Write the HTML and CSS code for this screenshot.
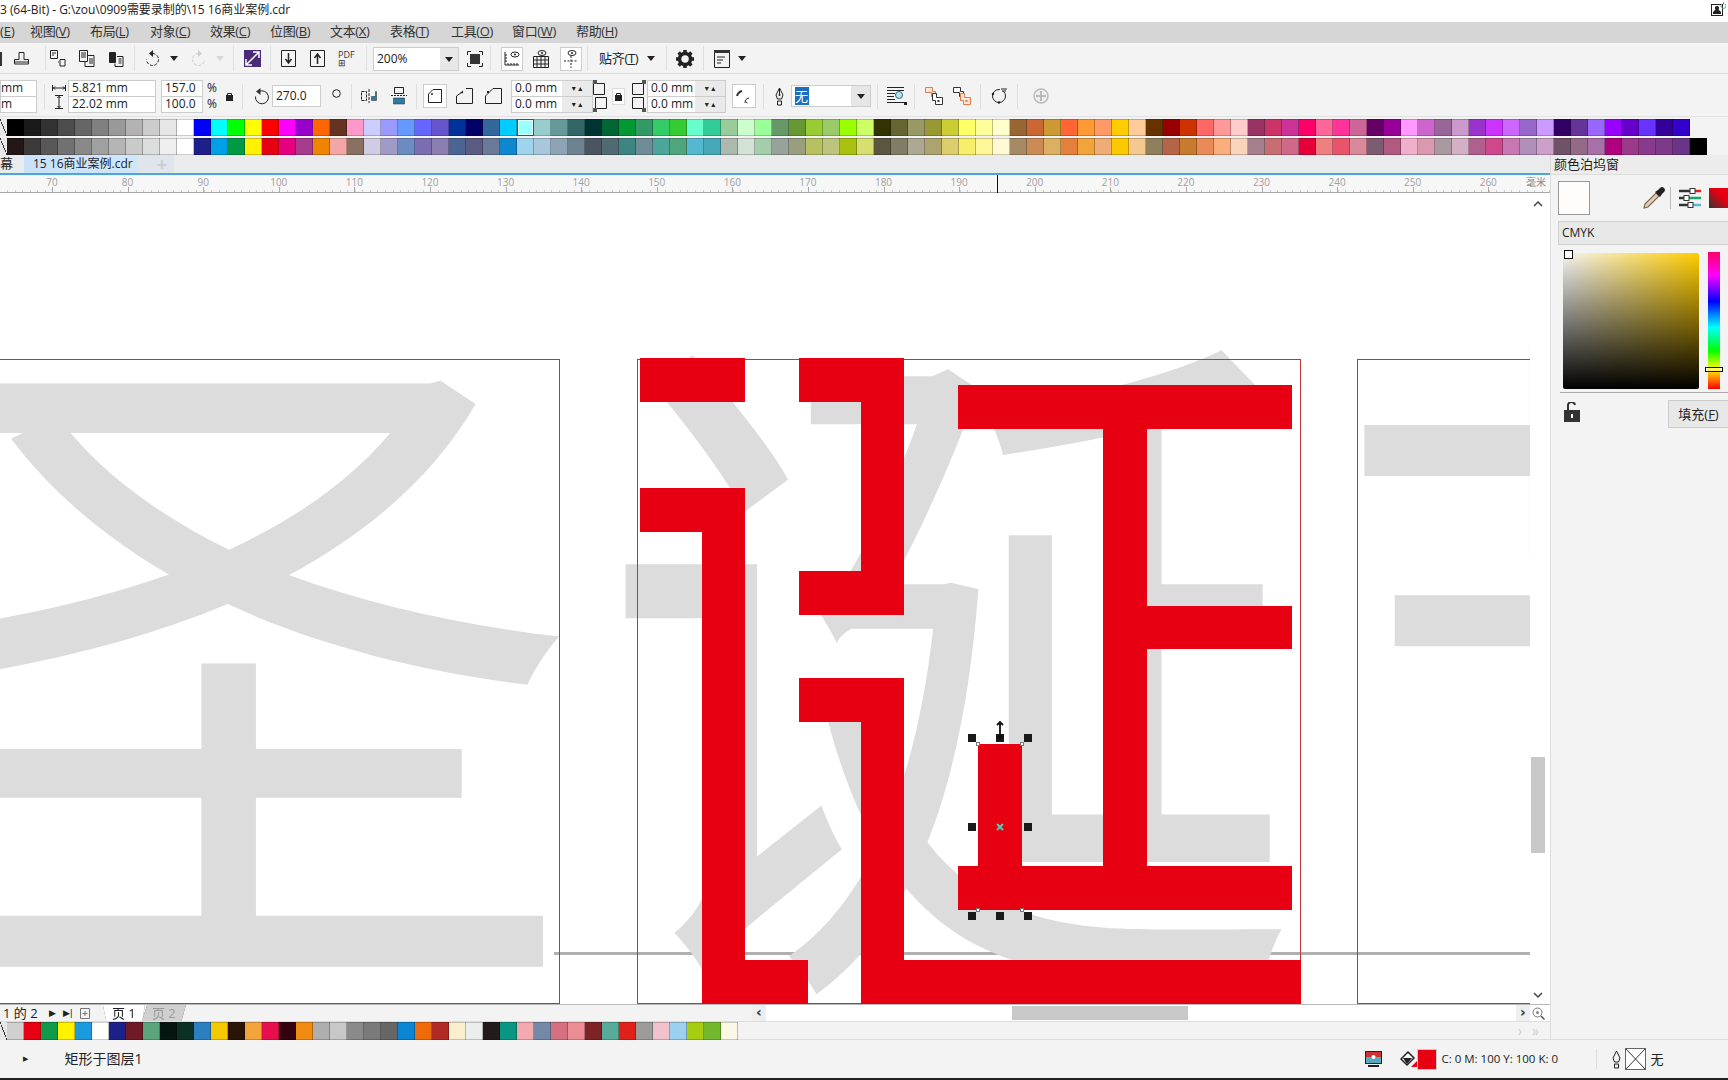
FILE: index.html
```html
<!DOCTYPE html>
<html lang="zh">
<head>
<meta charset="utf-8">
<title>CorelDRAW</title>
<link rel="stylesheet" href="styles.css">
</head>
<body>
<header class="title"><span>3 (64-Bit) - G:\zou\0909需要录制的\15 16商业案例.cdr</span>
<svg class="account" width="15" height="14" viewBox="0 0 15 14"><rect x=".5" y="2.5" width="11" height="11" fill="#fff" stroke="#222"/><path d="M6 4a2 2 0 0 1 1.5 3.4L10 10v2H2v-2l2.500-2.600A2 2 0 0 1 6 4z" fill="#222"/><path d="M11 2a2.500 2.500 0 1 0 3 0M12.500 0v2.500" fill="none" stroke="#4a9" stroke-width="1"/></svg></header>
<nav class="menu">
<span class="cut">(<u>E</u>)</span><span>视图(<u>V</u>)</span><span>布局(<u>L</u>)</span><span>对象(<u>C</u>)</span><span>效果(<u>C</u>)</span><span>位图(<u>B</u>)</span><span>文本(<u>X</u>)</span><span>表格(<u>T</u>)</span><span class="m-w1">工具(<u>O</u>)</span><span class="m-w2">窗口(<u>W</u>)</span><span>帮助(<u>H</u>)</span>
</nav>
<div class="tb tb1">
<i class="stub"></i>
<svg class="ml12" width="15" height="16" viewBox="0 0 15 16"><path d="M5 1.500h5v7h4.500v4.500H.5V8.500H5zM.5 11h14" class="ln"/></svg>
<i class="sep ml16"></i>
<svg class="ml4" width="16" height="17" viewBox="0 0 16 17"><path d="M.5.500h7v8h-7zM2 3h4M2 5h2M10 9.500h5v6.500h-5zM8 12h1" class="ln"/></svg>
<svg class="ml13" width="16" height="17" viewBox="0 0 16 17"><path d="M.5.500h8v11h-8zM2 3h5M2 5h5M2 7h5M9 5.500h6v11H6v-5M10 9h4M10 11h4M10 13h4" class="ln"/></svg>
<svg class="ml13" width="16" height="17" viewBox="0 0 16 17"><rect x="1" y="2" width="7" height="11" rx="1" fill="#222"/><path d="M9 6.500h6v10H7v-3M10.500 9h3M10.500 11h3M10.500 13h3" class="ln"/></svg>
<i class="sep ml10"></i>
<svg class="ml9" width="17" height="17" viewBox="0 0 17 17"><path d="M8.500 3.500a6 6 0 1 1-6 6" class="ln" stroke-dasharray="3 1.500"/><path d="M9 0v7L5 3.500z" fill="#222"/></svg>
<b class="tri ml9"></b>
<svg class="ml12" width="17" height="17" viewBox="0 0 17 17"><path d="M8.500 3.500a6 6 0 1 0 6 6" class="ln lt" stroke-dasharray="3 1.500"/><path d="M8 0v7l4-3.500z" fill="#ccc"/></svg>
<b class="tri tri-off ml9"></b>
<i class="sep ml9"></i>
<svg class="ml10" width="17" height="17" viewBox="0 0 17 17"><rect width="17" height="17" fill="#4b2a78"/><path d="M2 15 15 2M9 2h6v6M2 9v6h6" fill="none" stroke="#fff" stroke-width="1.500"/></svg>
<i class="sep ml9"></i>
<svg class="ml10" width="15" height="17" viewBox="0 0 15 17"><path d="M.5.500h14v16H.5z" class="ln"/><path d="M7.500 3v9M4.500 9l3 4 3-4" fill="none" stroke="#222" stroke-width="1.500"/></svg>
<svg class="ml14" width="15" height="17" viewBox="0 0 15 17"><path d="M.5.500h14v16H.5z" class="ln"/><path d="M7.500 14V5M4.500 8l3-4 3 4" fill="none" stroke="#222" stroke-width="1.500"/></svg>
<span class="pdf ml13">PDF<br><em>⊞</em></span>
<i class="sep ml10"></i>
<div class="zoomsel ml6"><span>200%</span><b class="tri"></b></div>
<svg class="ml8" width="16" height="16" viewBox="0 0 16 16"><rect x="3" y="3" width="10" height="10" fill="#333"/><path d="M.5 4V.500H4M12 .5h3.500V4M15.500 12v3.500H12M4 15.500H.5V12" class="ln"/></svg>
<i class="sep ml7"></i>
<span class="boxed ml10"><svg width="18" height="18" viewBox="0 0 18 18"><path d="M2 2v13h14M2 5h2M2 8h2M2 11h2M5 13v2M8 13v2M11 13v2M14 13v2" class="ln"/><ellipse cx="12" cy="4.500" rx="4" ry="2.500" class="ln"/><circle cx="12" cy="4.500" r="1" fill="#222"/></svg></span>
<svg class="ml10" width="16" height="18" viewBox="0 0 16 18"><path d="M.5 6.500h15v11H.5zM4 6.500v11M8 6.500v11M12 6.500v11M.5 10h15M.5 14h15" class="ln"/><ellipse cx="9" cy="3" rx="4" ry="2.500" class="ln"/><circle cx="9" cy="3" r="1" fill="#222"/></svg>
<span class="boxed ml11"><svg width="18" height="18" viewBox="0 0 18 18"><path d="M9 6v12M2 11h14" class="ln" stroke-dasharray="2 1.500"/><ellipse cx="10" cy="3" rx="4" ry="2.500" class="ln"/><circle cx="10" cy="3" r="1" fill="#222"/></svg></span>
<i class="sep ml5"></i>
<span class="tx ml11">贴齐(<u>T</u>)</span>
<b class="tri ml7"></b>
<i class="sep ml11"></i>
<svg class="ml9" width="18" height="18" viewBox="0 0 18 18"><circle cx="9" cy="9" r="5.500" fill="none" stroke="#222" stroke-width="3.500"/><path d="M9 0v3M9 15v3M0 9h3M15 9h3M2.600 2.600l2 2M13.400 13.400l2 2M15.400 2.600l-2 2M4.600 13.400l-2 2" stroke="#222" stroke-width="3.500" fill="none"/></svg>
<i class="sep ml9"></i>
<svg class="ml10" width="16" height="18" viewBox="0 0 16 18"><path d="M.5.500h15v17H.5z" class="ln"/><rect width="16" height="3" fill="#333"/><path d="M3 7h8M3 10h6M3 13h4" class="ln"/></svg>
<b class="tri ml8"></b>
</div>
<div class="tb tb2">
<div class="stack st-a"><span class="fld">mm</span><span class="fld">m</span></div>
<i class="sep ml7"></i>
<div class="stack st-ic ml7">
<svg width="14" height="8" viewBox="0 0 14 8"><path d="M.5 1v6M13.500 1v6M1 4h12M3 2.500 1.500 4 3 5.500M11 2.500 12.500 4 11 5.500" class="ln"/></svg>
<svg width="14" height="14" viewBox="0 0 14 14"><path d="M3 .5h8M3 13.500h8M7 1v12M5.500 3 7 1.500 8.500 3M5.500 11 7 12.500 8.500 11" class="ln"/></svg>
</div>
<div class="stack st-size ml2"><span class="fld">5.821 mm</span><span class="fld">22.02 mm</span></div>
<div class="stack st-pct ml5"><span class="fld">157.0</span><span class="fld">100.0</span></div>
<div class="stack st-p ml4"><span>%</span><span>%</span></div>
<svg class="ml9" width="7" height="9" viewBox="0 0 7 9"><rect y="3" width="7" height="6" fill="#222"/><path d="M1.500 3V1.500h4V3" class="ln"/></svg>
<i class="sep ml9"></i>
<svg class="ml11" width="16" height="17" viewBox="0 0 16 17"><path d="M5 3.500a6.500 6.500 0 1 1-3.500 5" class="ln"/><path d="M6.500 0v7L2 3.500z" fill="#333"/></svg>
<span class="fld fld-one rot ml2">270.0</span>
<svg class="ml11 up" width="9" height="9" viewBox="0 0 9 9"><circle cx="4.500" cy="4.500" r="3.800" class="ln"/></svg>
<i class="sep ml10"></i>
<svg class="ml9" width="16" height="14" viewBox="0 0 16 14"><path d="M.5 2.500h5v9h-5zM8 0v14" class="ln" stroke-dasharray="3 1"/><path d="M10.500 7.500h4v-5h1v9h-5z" fill="#2b7ca8" stroke="#222" stroke-width=".5"/></svg>
<svg class="ml14" width="16" height="18" viewBox="0 0 16 18"><path d="M3.500.5h9v6h-9z" class="ln"/><path d="M0 8.500h16" class="ln" stroke-dasharray="2 1"/><path d="M2.500 11h11v6h-11z" fill="#2b7ca8" stroke="#222" stroke-width=".5"/></svg>
<i class="sep ml9"></i>
<span class="cbox ml6"><svg width="14" height="14" viewBox="0 0 14 14"><path d="M.5 13.500V5L5 .5h8.500v13z" class="ln"/><circle cx="4" cy="5" r="1" fill="#222"/></svg></span>
<svg class="ml9" width="17" height="16" viewBox="0 0 17 16"><path d="M.5 15.500V8l5-3.500M10 .5h6.500v15H.5" class="ln"/><path d="M6 1l3 3-3 3z" fill="#222" transform="rotate(45 6 4) scale(.7) translate(2 2)"/></svg>
<svg class="ml12" width="17" height="16" viewBox="0 0 17 16"><path d="M.5 15.500V8L8 .5h8.500v15z" class="ln"/><path d="M2 3h2v2H2z" fill="#222"/></svg>
<div class="stack st-mm ml9"><span class="fld spn">0.0 mm<b>▾ ▴</b></span><span class="fld spn">0.0 mm<b>▾ ▴</b></span></div>
<div class="stack st-ic2">
<svg width="14" height="15" viewBox="0 0 14 15"><path d="M.5 3.500h11v11H.5z" class="ln"/><rect width="4" height="4" fill="#555"/></svg>
<svg width="14" height="15" viewBox="0 0 14 15"><path d="M2.500.5h11v11h-11z" class="ln"/><rect y="11" width="4" height="4" fill="#555"/></svg>
</div>
<span class="lockbox ml5"><svg width="7" height="9" viewBox="0 0 7 9"><rect y="3" width="7" height="6" fill="#222"/><path d="M1.500 3V1.500h4V3" class="ln"/></svg></span>
<div class="stack st-ic2 ml7">
<svg width="14" height="15" viewBox="0 0 14 15"><path d="M.5 3.500h11v11H.5z" class="ln"/><rect x="10" width="4" height="4" fill="#555"/></svg>
<svg width="14" height="15" viewBox="0 0 14 15"><path d="M.5.500h11v11H.5z" class="ln"/><rect x="10" y="11" width="4" height="4" fill="#555"/></svg>
</div>
<div class="stack st-mm2 ml1"><span class="fld spn">0.0 mm<b>▾ ▴</b></span><span class="fld spn">0.0 mm<b>▾ ▴</b></span></div>
<span class="cbox ml6"><svg width="16" height="16" viewBox="0 0 16 16"><path d="M1 8a7 7 0 0 1 5-5" fill="none" stroke="#333" stroke-width="2"/><path d="M9 15a5 5 0 0 1 4-5" class="ln"/><path d="M10 14l1.500 1" class="ln"/></svg></span>
<i class="sep ml7"></i>
<svg class="ml11" width="9" height="19" viewBox="0 0 9 19"><path d="M4.500 1 8 8l-1.500 4h-4L1 8zM4.500 1v6M2.500 14h4v4h-4z" class="ln"/><circle cx="4.500" cy="8" r="1" fill="#222"/></svg>
<div class="selbox ml7"><span class="seltx"><mark>无</mark></span><span class="selbtn"><b class="tri"></b></span></div>
<i class="sep ml6"></i>
<svg class="ml9" width="20" height="18" viewBox="0 0 20 18"><path d="M0 .5h17M0 3.500h17M0 6.500h8M0 9.500h7M0 12.500h8M0 15.500h17" class="ln"/><circle cx="12" cy="8" r="3.500" fill="#bfe0f0" stroke="#277" /><path d="M17 15h3v3h-3z" fill="#222"/></svg>
<i class="sep ml7"></i>
<svg class="ml10" width="18" height="18" viewBox="0 0 18 18"><path d="M.5.500h7v4h3v5h-4v-4h-6z" fill="#fde6d8" stroke="#e27a4a"/><path d="M7.500 6.500h4v4h6v7h-7v-4h-3z" fill="#fff" stroke="#333"/><rect x="12.500" y="13" width="2" height="2" fill="#333"/></svg>
<svg class="ml10" width="18" height="18" viewBox="0 0 18 18"><path d="M.5.500h7v4h3v5h-4v-4h-6z" fill="#fff" stroke="#333"/><path d="M7.500 6.500h4v4h6v7h-7v-4h-3z" fill="#fde6d8" stroke="#e27a4a"/><rect x="12.500" y="13" width="2" height="2" fill="#e27a4a"/></svg>
<i class="sep ml9"></i>
<svg class="ml10" width="16" height="16" viewBox="0 0 16 16"><circle cx="8" cy="8" r="6.500" class="ln"/><rect x="9" y="0" width="7" height="3" fill="#f3f3f3"/><path d="M10 1h6M11 3h4" class="ln"/><circle cx="2" cy="6" r="1.200" fill="#222"/><circle cx="8" cy="14.500" r="1.200" fill="#222"/></svg>
<i class="sep ml10"></i>
<svg class="ml15" width="16" height="16" viewBox="0 0 16 16"><circle cx="8" cy="8" r="7" fill="#eee" stroke="#bbb" stroke-width="1.500"/><path d="M8 3v10M3 8h10" stroke="#bbb" stroke-width="2"/></svg>
</div>
<div class="pal" id="pal"></div>
<main class="work">
<div class="center">
<div class="tabs"><span class="tab-cut">幕</span><div class="tab-on"><span>15 16商业案例.cdr</span><em>+</em></div></div>
<div class="ruler"><span>70</span><span>80</span><span>90</span><span>100</span><span>110</span><span>120</span><span>130</span><span>140</span><span>150</span><span>160</span><span>170</span><span>180</span><span>190</span><span>200</span><span>210</span><span>220</span><span>230</span><span>240</span><span>250</span><span>260</span><span class="unit">毫米</span><i class="mark"></i></div>
<div class="view">
<div class="canvas">
<svg class="art" width="1530" height="811" viewBox="0 193 1530 811">
<rect x="554" y="952" width="976" height="3" fill="#b0b0b0"/>
<text class="glyph" x="229" y="935">圣</text>
<text class="glyph" x="948" y="937">诞</text>
<text class="glyph" x="1679" y="939">节</text>
<g class="frames">
<rect x="-20" y="359.500" width="579.500" height="644"/>
<rect x="637.500" y="359.500" width="663" height="644"/>
<rect x="1357.500" y="359.500" width="300" height="644"/>
</g>
<g class="red">
<rect x="640" y="358" width="105" height="44"/>
<rect x="799" y="358" width="105" height="44"/>
<rect x="861" y="358" width="43" height="257"/>
<rect x="799" y="571" width="105" height="44"/>
<rect x="640" y="488" width="105" height="44"/>
<rect x="702" y="488" width="43" height="516"/>
<rect x="702" y="960" width="106" height="44"/>
<rect x="799" y="678" width="105" height="44"/>
<rect x="861" y="678" width="43" height="326"/>
<rect x="861" y="960" width="440" height="44"/>
<rect x="958" y="385" width="334" height="44"/>
<rect x="1103" y="385" width="44" height="525"/>
<rect x="1103" y="606" width="189" height="43"/>
<rect x="958" y="866" width="334" height="44"/>
<rect x="978" y="744" width="44" height="166"/>
</g>
<g class="hd">
<rect x="968" y="734" width="8" height="8"/><rect x="996" y="734" width="8" height="8"/><rect x="1024" y="734" width="8" height="8"/>
<rect x="968" y="823" width="8" height="8"/><rect x="1024" y="823" width="8" height="8"/>
<rect x="968" y="912" width="8" height="8"/><rect x="996" y="912" width="8" height="8"/><rect x="1024" y="912" width="8" height="8"/>
</g>
<g class="nodes">
<rect x="976.500" y="742.500" width="3" height="3"/><rect x="1020.500" y="742.500" width="3" height="3"/><rect x="976.500" y="908.500" width="3" height="3"/><rect x="1020.500" y="908.500" width="3" height="3"/>
</g>
<path d="M997 824l6 6M1003 824l-6 6" stroke="#4dd0b8" stroke-width="2"/>
<path d="M1000 722v17M997 725l3-3 3 3M997 736l3 3 3-3" fill="none" stroke="#111" stroke-width="1.800"/>
</svg>
</div>
<div class="vbar">
<svg class="arrow" width="12" height="8" viewBox="0 0 12 8"><path d="M2 6l4-4 4 4" fill="none" stroke="#444" stroke-width="1.500"/></svg>
<i class="thumb-v"></i>
<svg class="arrow arrow-d" width="12" height="8" viewBox="0 0 12 8"><path d="M2 2l4 4 4-4" fill="none" stroke="#444" stroke-width="1.500"/></svg>
</div>
</div>
<div class="nav">
<div class="pages"><span class="pg">1 的 2</span><span class="pg-ar">▶</span><span class="pg-ar2">▶|</span>
<svg class="ml7" width="10" height="11" viewBox="0 0 10 11"><path d="M.5.500h9v10h-9zM5 3v5M2.500 5.500h5" class="ln lt2"/></svg>
<div class="ptabs ml13"><span class="ptab on">页 1</span><span class="ptab off">页 2</span></div></div>
<div class="hbar"><span class="harrow">‹</span><i class="thumb-h"></i><span class="harrow r">›</span><svg class="ml2" width="13" height="13" viewBox="0 0 13 13"><circle cx="5.500" cy="5.500" r="4.500" class="ln lt2"/><circle cx="5.500" cy="5.500" r="1.500" fill="#888"/><path d="M9 9l3.500 3.500" stroke="#555" stroke-width="1.500"/></svg></div>
</div>
<div class="docpal"><div class="dp" id="dp"></div><span class="more">› <em>»</em></span></div>
</div>
<aside class="docker">
<div class="dk-head">颜色泊坞窗</div>
<div class="dk-row">
<i class="dk-swatch"></i>
<svg class="dk-drop" width="22" height="22" viewBox="0 0 22 22"><path d="M1 21l1-4L13 6l3 3L5 20z" fill="#d8d0c8" stroke="#864" stroke-width="1.200"/><path d="M12 5l5 5 2-3 2-2a2.500 2.500 0 0 0-4-4l-2 2z" fill="#222"/></svg>
<i class="dk-line"></i>
<svg class="ml8" width="22" height="20" viewBox="0 0 22 20"><g stroke-width="2.500"><path d="M0 3h11" stroke="#333"/><path d="M16 3h6" stroke="#d22"/><path d="M0 10h5" stroke="#333"/><path d="M10 10h12" stroke="#1a6"/><path d="M0 17h9" stroke="#333"/><path d="M14 17h8" stroke="#5bd"/></g><rect x="11" y=".5" width="5" height="5" fill="#fff" stroke="#333"/><rect x="5" y="7.500" width="5" height="5" fill="#fff" stroke="#333"/><rect x="9" y="14.500" width="5" height="5" fill="#fff" stroke="#333"/></svg>
<i class="dk-mini"></i>
</div>
<div class="dk-sel">CMYK</div>
<div class="picker"><i class="p-sq"><b></b></i><i class="p-hue"><b></b></i></div>
<div class="dk-foot">
<svg width="16" height="20" viewBox="0 0 16 20"><rect y="8" width="16" height="12" fill="#333"/><path d="M4 8V4a3.500 3.500 0 0 1 7-1" fill="none" stroke="#333" stroke-width="2"/><rect x="7" y="12" width="2" height="4" fill="#fff"/></svg>
<span class="fillbtn">填充(<u>F</u>)</span>
</div>
</aside>
</main>
<footer class="status">
<span class="st-l">▶</span><span class="st-t">矩形于图层1</span>
<svg class="st-mon" width="17" height="16" viewBox="0 0 17 16"><rect x=".5" y=".5" width="16" height="12" fill="#5ab" stroke="#222"/><rect x="1" y="1" width="15" height="5" fill="#c33"/><circle cx="8.500" cy="6" r="2" fill="#fff"/><path d="M3 15h11" stroke="#222" stroke-width="2"/></svg>
<svg class="ml18" width="17" height="16" viewBox="0 0 17 16"><path d="M8 1 1 8l6 6 7-7z" fill="#fff" stroke="#222" stroke-width="1.500"/><path d="M3 7h9l-5 6z" fill="#222"/><path d="M17 10v6h-6z" fill="#e60012"/></svg>
<i class="st-fill"></i>
<span class="st-cmyk">C: 0 M: 100 Y: 100 K: 0</span>
<i class="st-sep"></i>
<svg class="ml15" width="9" height="19" viewBox="0 0 9 19"><path d="M4.500 1 8 8l-1.500 4h-4L1 8zM2.500 14h4v4h-4z" class="ln"/></svg>
<svg class="ml4" width="21" height="22" viewBox="0 0 21 22"><rect x=".5" y=".5" width="20" height="21" fill="#fff" stroke="#666"/><path d="M1 1l19 20M20 1 1 21" stroke="#333"/></svg>
<span class="st-no">无</span>
</footer>
<div class="blackbar"></div>
<script src="palette.js"></script>
</body>
</html>
```
FILE: styles.css
```css
*{box-sizing:border-box}
html,body{margin:0;padding:0}
body{width:1728px;height:1080px;overflow:hidden;display:flex;flex-direction:column;background:#f3f3f3;color:#222;font:13px/1 "Open Sans","Noto Sans CJK SC",sans-serif}
i,b,em{font-style:normal;display:block}
svg{display:block;flex:none}
.ln{fill:none;stroke:#222;stroke-width:1}
.lt{stroke:#ccc}
.lt2{stroke:#777}
.ml1{margin-left:1px}.ml2{margin-left:2px}.ml4{margin-left:4px}.ml5{margin-left:5px}.ml6{margin-left:6px}.ml7{margin-left:7px}.ml8{margin-left:8px}.ml9{margin-left:9px}.ml10{margin-left:10px}.ml11{margin-left:11px}.ml12{margin-left:12px}.ml13{margin-left:13px}.ml14{margin-left:14px}.ml15{margin-left:15px}.ml16{margin-left:16px}.ml18{margin-left:18px}
.title{height:22px;flex:none;background:#fff;display:flex;align-items:center;justify-content:space-between;padding:0 2px 3px 0;font-size:12px;letter-spacing:-.05px}
.account{margin-top:-1px}
.menu{height:21px;flex:none;background:#d6d6d6;display:flex;align-items:center;gap:20px;color:#333;font-size:13px;padding-bottom:2px}
.menu span{width:40px;white-space:nowrap;letter-spacing:-.35px}
.menu .cut{width:10px;letter-spacing:0}
.menu .m-w1{width:41px;margin-left:1px}
.menu .m-w2{width:44px}
.tb{flex:none;display:flex;align-items:center;background:#f3f3f3;border-bottom:1px solid #dcdcdc}
.tb1{height:31px;padding-top:1px}
.tb2{height:43px;padding-top:2px;border-bottom:1px solid #e2e2e2}
.stub{width:2px;height:14px;background:#333;flex:none}
.sep{width:1px;height:25px;background:#dedede;flex:none}
.tri{width:0;height:0;border:4px solid transparent;border-top:5px solid #222;border-bottom:0;flex:none}
.tri-off{border-top-color:#d8d8d8}
.pdf{font-size:9px;line-height:9px;width:18px;color:#333}
.pdf em{font-size:9px;line-height:8px}
.zoomsel{width:86px;height:24px;border:1px solid #ccc;background:#fff;display:flex;align-items:center;justify-content:space-between;font-size:12px;padding-left:3px}
.zoomsel .tri{margin-right:0;width:18px;height:22px;border:0;background:#e8e8e8;position:relative}
.zoomsel .tri::after{content:"";position:absolute;left:5px;top:9px;border:4px solid transparent;border-top:5px solid #222;border-bottom:0}
.boxed{width:22px;height:24px;border:1px solid #ccc;background:#fff;display:flex;align-items:center;justify-content:center}
.tx{font-size:13px;white-space:nowrap;width:41px;letter-spacing:-.3px}
.stack{display:flex;flex-direction:column;flex:none}
.fld{height:17px;background:#fff;border:1px solid #ccc;font-size:12px;line-height:14px;padding-left:3px;white-space:nowrap;overflow:hidden;display:flex;align-items:center}
.stack .fld+.fld{margin-top:-1px}
.st-a{width:37px}
.st-a .fld{padding-left:0}
.st-ic{width:14px;gap:3px;align-items:center}
.st-size{width:88px}
.st-pct{width:42px}
.st-p{width:10px;gap:4px;font-size:12px}
.fld-one{height:22px}
.rot{width:49px}
.up{margin-top:-5px}
.spn{padding-right:0;position:relative}
.spn b{position:absolute;right:0;top:0;width:30px;height:100%;background:#eaeaea;font:8px/15px "DejaVu Sans",sans-serif;text-align:center}
.st-mm{width:82px}
.st-mm2{width:79px}
.st-ic2{width:14px;gap:2px}
.lockbox{width:13px;height:17px;border:1px solid #ddd;background:#fff;display:flex;align-items:center;justify-content:center;flex:none}
.cbox{width:24px;height:24px;border:1px solid #ccc;background:#fff;display:flex;align-items:center;justify-content:center;flex:none}
.selbox{width:80px;height:22px;border:1px solid #ccc;background:#fff;display:flex;flex:none}
.seltx{flex:1;padding:1px 0 0 3px}
.seltx mark{display:inline-block;background:#1b6fc0;color:#fff;width:14px;height:18px;font-size:13px;line-height:18px}
.selbtn{width:19px;background:#e6e6e6;display:flex;align-items:center;justify-content:center}
.pal{height:38px;flex:none;display:flex;flex-direction:column;gap:2px;padding:2px 0 1px 0;background:#f3f3f3}
.pal-row{display:flex;height:17px}
.x{width:7px;height:17px;flex:none;background:linear-gradient(to top right,transparent 47%,#333 47% 53%,transparent 53%),#e8e8e8}
.sw{width:17px;flex:none;box-shadow:inset -1px 0 0 rgba(0,0,0,.25),inset 0 -1px 0 rgba(0,0,0,.2),inset 0 1px 0 rgba(0,0,0,.2)}
.sw.sel{outline:1px solid #2f5d5d;outline-offset:-1px;box-shadow:inset 0 0 0 1px #2f6f70,inset 0 0 0 2px #dff}
.work{height:885px;flex:none;display:flex;border-bottom:1px solid #ddd}
.center{width:1550px;flex:none;display:flex;flex-direction:column}
.tabs{height:20px;flex:none;background:#e9ebec;display:flex;border-bottom:2px solid #4aa8d8;align-items:stretch}
.tab-cut{width:24px;padding-top:2px;font-size:13px}
.tab-on{width:150px;display:flex;justify-content:space-between;align-items:center;background:linear-gradient(90deg,#c9e2fb,#cfe6fb 75%,#dfe5ea 76%);padding:0 7px 0 9px;font-size:12px}
.tab-on em{color:#c8cfd4;font-size:18px;font-weight:700}
.ruler{height:18px;flex:none;display:flex;padding-left:14.200px;position:relative;background:
 repeating-linear-gradient(90deg,#aaa 0 1px,transparent 1px 75.600px) 51.800px 100%/100% 5px no-repeat,
 repeating-linear-gradient(90deg,#ccc 0 1px,transparent 1px 7.560px) 6.500px 100%/100% 2px no-repeat,#f7f7f7;border-bottom:1px solid #a8a8a8}
.ruler span{width:75.600px;flex:none;text-align:center;color:#a0a0a0;font-size:10px;line-height:11px;padding-top:2px}
.ruler .unit{width:20px;font-size:10px;color:#888;white-space:nowrap}
.mark{position:absolute;left:997px;top:0;width:1px;height:18px;background:#111}
.view{height:811px;flex:none;display:flex;background:#fff}
.canvas{width:1530px;flex:none;overflow:hidden;position:relative}
.glyph{font:707px "Noto Sans CJK SC",sans-serif;fill:#dcdcdc;text-anchor:middle}
.frames rect{fill:none;stroke:#c4323c;stroke-width:1}
.red rect{fill:#e60012}
.hd rect{fill:#1a1a1a}
.nodes rect{fill:#fff;stroke:#777;stroke-width:1}
.vbar{width:20px;flex:none;display:flex;flex-direction:column;align-items:center;padding-top:7px}
.arrow{margin-left:-4px}
.thumb-v{width:14px;height:96px;background:#c8c8c8;margin-top:549px;margin-left:-4px}
.arrow-d{margin-top:138px}
.nav{height:17px;flex:none;display:flex;border-top:1px solid #b8b8b8;background:#f3f3f3}
.pages{width:752px;flex:none;display:flex;align-items:center;font-size:13px;padding-left:3px}
.pg{width:37px;white-space:nowrap}
.pg-ar{font:9px "DejaVu Sans";margin-left:9px}
.pg-ar2{font:9px "DejaVu Sans";margin-left:7px}
.ptabs{display:flex;filter:drop-shadow(0 0 .6px #555)}
.ptab{height:16px;display:flex;align-items:center;justify-content:center;font-size:13px}
.ptab.on{width:42px;background:#fff;clip-path:polygon(0 0,100% 0,94% 100%,8% 100%)}
.ptab.off{width:44px;background:#d0d0d0;color:#999;clip-path:polygon(12% 0,100% 0,90% 100%,0 100%);margin-left:-3px}
.hbar{flex:1;display:flex;align-items:center;background:#fff;padding-right:5px}
.harrow{width:14px;height:16px;background:#eee;font:700 14px/14px "DejaVu Sans";text-align:center;flex:none;color:#333}
.harrow.r{margin-left:auto}
.thumb-h{width:176px;height:14px;background:#c8c8c8;margin-left:246px}
.docpal{height:19px;flex:none;display:flex;border-top:1px solid #ddd;align-items:center;justify-content:space-between;padding-right:11px}
.dp{display:flex;height:18px}
.dp .x{height:18px}
.dp .sw{height:18px}
.more{color:#ccc;font-size:14px;display:flex;gap:10px}
.docker{flex:1;border-left:1px solid #dcdcdc;display:flex;flex-direction:column;min-width:0;overflow:hidden}
.dk-head{height:20px;flex:none;background:#ececec;border-bottom:1px solid #ddd;padding:3px 0 0 3px;font-size:13px}
.dk-row{height:46px;flex:none;display:flex;align-items:center;padding-left:7px}
.dk-swatch{width:32px;height:34px;background:#fffdfb;border:1px solid #999;flex:none}
.dk-drop{margin-left:53px}
.dk-line{width:1px;height:22px;background:#bbb;margin-left:5px;flex:none}
.dk-mini{width:20px;height:20px;background:linear-gradient(45deg,#333,#e60012 60%);margin-left:8px;flex:none}
.dk-sel{height:24px;flex:none;margin-left:7px;background:#e8e8e8;border:1px solid #d0d0d0;border-right:0;padding:5px 0 0 3px;font-size:12px}
.picker{height:148px;flex:none;display:flex;padding:8px 0 0 3px;border-bottom:1px solid #aaa;margin-left:9px}
.p-sq{width:136px;height:136px;flex:none;background:linear-gradient(to bottom,transparent,#000),linear-gradient(to right,#f4f4f4,#ffcc00);position:relative;border-radius:2px}
.p-sq b{position:absolute;left:1px;top:-3px;width:9px;height:9px;border:1px solid #111;background:#fff}
.p-hue{width:12px;height:137px;margin-left:9px;margin-top:-1px;flex:none;position:relative;background:linear-gradient(#ff0066,#ff00ff 17%,#0000ff 36%,#00ffff 55%,#00ff00 72%,#ffff00 85%,#ff0000 100%)}
.p-hue b{position:absolute;left:-3px;top:115px;width:18px;height:5px;border:1px solid #111;background:rgba(255,255,200,.5)}
.dk-foot{display:flex;align-items:flex-start;padding:7px 0 0 13px}
.dk-foot svg{margin-top:2px}
.fillbtn{width:60px;height:28px;margin-left:88px;background:#e8e8e8;border:1px solid #ccc;border-right:0;font-size:13px;line-height:26px;text-align:center;white-space:nowrap}
.status{height:38px;flex:none;display:flex;align-items:center;background:#f3f3f3}
.st-l{margin-left:23px;font:7px "DejaVu Sans";color:#222}
.st-t{margin-left:36px;font-size:14px;width:90px;white-space:nowrap}
.st-mon{margin-left:1211px}
.st-fill{width:20px;height:21px;background:#e60012;border:1px solid #c9c9c9;flex:none}
.st-cmyk{margin-left:4px;font-size:11.500px;width:118px;white-space:nowrap}
.st-sep{width:1px;height:20px;background:#ddd;margin-left:37px;flex:none}
.st-no{margin-left:4px;font-size:13px}
.blackbar{height:2px;flex:none;background:#222}
```
FILE: palette.js
```js
var row1="000000 1a1a1a 333333 4d4d4d 666666 808080 999999 b3b3b3 cccccc e6e6e6 ffffff 0000ff 00ffff 00ff00 ffff00 ff0000 ff00ff 9900cc ff6600 663322 ff99cc ccccff 9999ff 6699ff 6666ff 6655cc 003399 000066 336699 00ccff 99ffff 99cccc 669999 336666 003333 006633 009933 339966 33cc66 33cc33 66ffcc 33cc99 99cc99 ccffcc 99ff99 669966 669933 99cc33 99cc66 99ff00 ccff66 333300 666633 999966 999933 cccc33 ffff66 ffff99 ffffcc 996633 cc6633 cc9933 ff6633 ff9933 ff9966 ffcc00 ffcc99 663300 990000 cc3300 ff6666 ff9999 ffcccc 993366 cc3366 cc3399 ff0066 ff6699 ff3399 cc6699 660066 990099 ff99ff cc66cc 996699 cc99cc 9933cc cc33ff cc66ff 9966cc cc99ff 330066 663399 9966ff 9900ff 6600cc 6633ff 330099 3300cc".split(" ");
var row2="231815 3e3a39 595757 727171 898989 9fa0a0 b5b5b6 c9caca dcdddd efefef ffffff 1d2088 00a0e9 009944 fff100 e60012 e4007f a73b8e f08300 f4a6a6 8a7060 cfcce3 a09ac6 6c8bc3 7a6db0 8a7fb0 4a6592 5b5a80 6b7898 0f87cf a0d4ec a9c7da 8ea4b4 6d8390 4a5561 4f6a72 3d8583 6f8d96 4ca59a 50a67c 53b8d0 47a9b7 aeb9ad d2e2d6 a3cea9 96a29a 999e7e b8c162 bcc47e a8c010 d7df71 5a5640 7f7d65 aca893 aca36f dcce6b f7ee6a fff799 fff9d5 a68a66 cc8b55 dbb062 e3803c f1a33c edad74 fcc800 f5c98e 8f7f5a b56447 c87a2e ea8a56 f9ae7c f9d4bc a5808c c86e70 d0688a e60039 f08080 e8556a d98a9a 7d5b70 b05a80 f0b0cc d89aae a89aa0 d4b0c4 b0608c d0488c c878b0 b090b8 cca0c8 705268 936a88 a870a8 b0007e 9c3a8a 8a3a8c 7e3a8a 6a3488 000000".split(" ");
var doc="d0d0d0 e60012 0f9b4b fff100 1a9be0 ffffff 1d2088 6f1a24 5ba57a 051510 0c3024 2a7fc1 f5c800 2a1408 f2a53c e60f4e 33040f f08a10 aeaeae c8c8c8 8a8a8a 7a7a7a 666666 0a86d4 ee6a0a b22a26 faf0d0 eceeee 231a1a 0a9682 f2a9b0 7588a8 d67080 ee8c96 7e2226 57ab98 e2201a 9c9c9c f2c2cc 9cd0f0 a8cc10 73b82c fbf8e8".split(" ");
function fill(host,list,selected){
  var x=document.createElement("i");x.className="x";host.appendChild(x);
  list.forEach(function(c,i){
    var s=document.createElement("i");
    s.className=i===selected?"sw sel":"sw";
    s.style.background="#"+c;
    host.appendChild(s);
  });
}
var pal=document.getElementById("pal");
[[row1,30],[row2,-1]].forEach(function(r){
  var d=document.createElement("div");d.className="pal-row";pal.appendChild(d);fill(d,r[0],r[1]);
});
fill(document.getElementById("dp"),doc,-1);
```
